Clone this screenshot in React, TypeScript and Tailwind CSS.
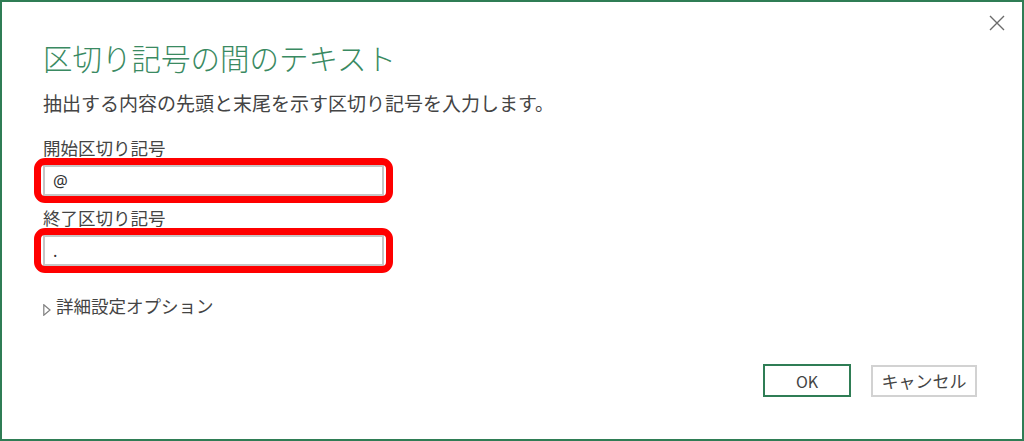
import React from 'react';

const jp = { fontFamily: '"Segoe UI", "Noto Sans CJK JP", "Noto Sans", sans-serif' };

interface FieldProps {
  label: string;
  value: string;
  labelTop: string;
}

const DelimiterField: React.FC<FieldProps> = ({ label, value, labelTop }) => (
  <div className={labelTop}>
    <div className="text-[17.5px] leading-[22px] text-[#444]">{label}</div>
    <div className="relative mt-[6px] w-[341px]">
      <input
        readOnly
        value={value}
        className="w-full h-[31px] border-2 border-[#c6c6c6] bg-white px-[8px] text-[16.5px] text-[#333] outline-none"
        style={{ fontFamily: '"Noto Sans", sans-serif' }}
      />
      {/* red annotation around the field */}
      <div className="absolute -left-[9px] -right-[9px] -top-[7px] -bottom-[7px] border-[7px] border-[#ff0000] rounded-[11px] pointer-events-none" />
    </div>
  </div>
);

export default function App() {
  return (
    <div className="w-[1024px] h-[441px] bg-white" style={jp}>
      <div className="relative h-full border-2 border-[#2f7d55] flex flex-col pl-[41px] pr-[45px] pt-[37px] pb-[42px]">
        <button className="absolute top-[12px] right-[16px] w-[18px] h-[18px] flex items-center justify-center">
          <svg width="16" height="16" viewBox="0 0 16 16" fill="none" stroke="#6b6b6b" strokeWidth="1.4">
            <path d="M1 1 L15 15 M15 1 L1 15" />
          </svg>
        </button>

        <h1 className="text-[29.5px] leading-[36px] text-[#3a8a62] font-light">区切り記号の間のテキスト</h1>
        <p className="mt-[16px] text-[19px] leading-[24px] text-[#444]">
          抽出する内容の先頭と末尾を示す区切り記号を入力します。
        </p>

        <DelimiterField label="開始区切り記号" value="@" labelTop="mt-[22px]" />
        <DelimiterField label="終了区切り記号" value="." labelTop="mt-[11px]" />

        <div className="mt-[29px] flex items-center gap-[5px] text-[17.5px] leading-[22px] text-[#444]">
          <svg width="8" height="12" viewBox="0 0 8 12" className="mt-[7px]">
            <path d="M0.8 0.8 L7 6 L0.8 11.2 Z" fill="none" stroke="#808080" strokeWidth="1.2" />
          </svg>
          <span>詳細設定オプション</span>
        </div>

        <div className="flex-1" />

        <div className="flex justify-end items-end gap-[20px]">
          <button className="w-[88px] h-[33px] border-2 border-[#2f7d55] bg-white text-[16px] text-[#444]">
            OK
          </button>
          <button className="w-[106px] h-[32px] border-2 border-[#d2d2d2] bg-white text-[17px] text-[#444]">
            キャンセル
          </button>
        </div>
      </div>
    </div>
  );
}
